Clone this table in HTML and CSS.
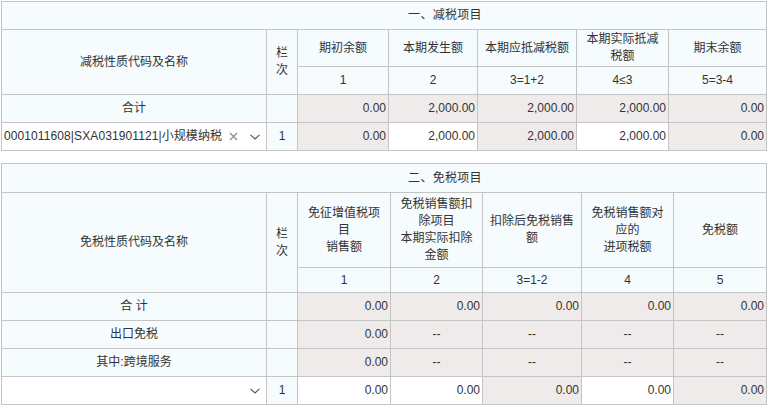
FILE: index.html
```html
<!DOCTYPE html>
<html lang="zh">
<head>
<meta charset="utf-8">
<link rel="stylesheet" href="styles.css">
</head>
<body>
<div class="page">
  <table class="grid">
    <colgroup>
      <col class="w-name"><col class="w-no"><col class="w-a1"><col class="w-a2"><col class="w-a3"><col class="w-a4"><col class="w-a5">
    </colgroup>
    <tr class="r-title"><td class="title" colspan="7">一、减税项目</td></tr>
    <tr class="r-head1">
      <th class="hd" rowspan="2">减税性质代码及名称</th>
      <th class="hd" rowspan="2">栏次</th>
      <th class="hd">期初余额</th>
      <th class="hd">本期发生额</th>
      <th class="hd">本期应抵减税额</th>
      <th class="hd">本期实际抵减税额</th>
      <th class="hd">期末余额</th>
    </tr>
    <tr class="r-row">
      <th class="hd">1</th><th class="hd">2</th><th class="hd">3=1+2</th><th class="hd">4≤3</th><th class="hd">5=3-4</th>
    </tr>
    <tr class="r-row">
      <th class="hd">合计</th><th class="hd"></th>
      <td class="num ro">0.00</td><td class="num ro">2,000.00</td><td class="num ro">2,000.00</td><td class="num ro">2,000.00</td><td class="num ro">0.00</td>
    </tr>
    <tr class="r-row">
      <td class="sel">
        <div class="sel-box">
          <span class="sel-text">0001011608|SXA031901121|小规模纳税</span>
          <svg class="ico-x" width="9" height="9" viewBox="0 0 9 9"><path d="M1 1L8 8M8 1L1 8" stroke="#8f8f8f" stroke-width="1.3" fill="none"/></svg>
          <svg class="ico-down" width="10" height="6" viewBox="0 0 10 6"><path d="M0.5 0.8L5 5L9.5 0.8" stroke="#555" stroke-width="1.1" fill="none"/></svg>
        </div>
      </td>
      <th class="hd">1</th>
      <td class="num ro">0.00</td><td class="num">2,000.00</td><td class="num ro">2,000.00</td><td class="num">2,000.00</td><td class="num ro">0.00</td>
    </tr>
  </table>

  <table class="grid second">
    <colgroup>
      <col class="w-name"><col class="w-no"><col class="w-b1"><col class="w-b2"><col class="w-b3"><col class="w-b4"><col class="w-b5">
    </colgroup>
    <tr class="r-title2"><td class="title" colspan="7">二、免税项目</td></tr>
    <tr class="r-head2">
      <th class="hd" rowspan="2">免税性质代码及名称</th>
      <th class="hd" rowspan="2">栏次</th>
      <th class="hd">免征增值税项目<br>销售额</th>
      <th class="hd">免税销售额扣除项目<br>本期实际扣除金额</th>
      <th class="hd">扣除后免税销售额</th>
      <th class="hd">免税销售额对应的<br>进项税额</th>
      <th class="hd">免税额</th>
    </tr>
    <tr class="r-idx2">
      <th class="hd">1</th><th class="hd">2</th><th class="hd">3=1-2</th><th class="hd">4</th><th class="hd">5</th>
    </tr>
    <tr class="r-row">
      <th class="hd">合 计</th><th class="hd"></th>
      <td class="num ro">0.00</td><td class="num ro">0.00</td><td class="num ro">0.00</td><td class="num ro">0.00</td><td class="num ro">0.00</td>
    </tr>
    <tr class="r-row">
      <th class="hd">出口免税</th><th class="hd"></th>
      <td class="num ro">0.00</td><td class="ro dash">--</td><td class="ro dash">--</td><td class="ro dash">--</td><td class="ro dash">--</td>
    </tr>
    <tr class="r-row">
      <th class="hd">其中:跨境服务</th><th class="hd"></th>
      <td class="num ro">0.00</td><td class="ro dash">--</td><td class="ro dash">--</td><td class="ro dash">--</td><td class="ro dash">--</td>
    </tr>
    <tr class="r-row">
      <td class="sel">
        <div class="sel-box">
          <span class="sel-text"></span>
          <svg class="ico-down" width="10" height="6" viewBox="0 0 10 6"><path d="M0.5 0.8L5 5L9.5 0.8" stroke="#555" stroke-width="1.1" fill="none"/></svg>
        </div>
      </td>
      <th class="hd">1</th>
      <td class="num">0.00</td><td class="num">0.00</td><td class="num ro">0.00</td><td class="num">0.00</td><td class="num ro">0.00</td>
    </tr>
  </table>
</div>
</body>
</html>
```

FILE: styles.css
```css
html, body {
  margin: 0;
  padding: 0;
  background: #ffffff;
}

.page {
  padding: 1px 0 0 1px;
  font-family: "Liberation Sans", Arial, "Noto Sans CJK SC", sans-serif;
  font-size: 12px;
  color: #333333;
}

.grid {
  border-collapse: collapse;
  table-layout: fixed;
  width: 766px;
}

.grid.second {
  margin-top: 12px;
}

.w-name { width: 265px; }
.w-no { width: 31px; }
.w-a1 { width: 91px; }
.w-a2 { width: 89px; }
.w-a3 { width: 99px; }
.w-a4 { width: 92px; }
.w-a5 { width: 98px; }
.w-b1 { width: 93px; }
.w-b2 { width: 92px; }
.w-b3 { width: 99px; }
.w-b4 { width: 92px; }
.w-b5 { width: 93px; }

.grid td, .grid th {
  border: 1px solid #c4c4c4;
  padding: 0 5px;
  line-height: 17px;
  font-weight: normal;
  vertical-align: middle;
  overflow: hidden;
}

.r-title td { height: 27px; }
.r-title2 td { height: 28px; }
.r-head1 th { height: 36px; }
.r-head2 th { height: 74px; }
.r-row td, .r-row th { height: 27px; }
.r-idx2 th { height: 24px; }

.grid .title {
  background: #f6fbfd;
  text-align: center;
  padding: 0 0 0 122px;
  letter-spacing: 0.3px;
}

.grid .hd {
  background: #f6fbfd;
  text-align: center;
}

.grid .num {
  text-align: right;
  padding: 0 2px 0 0;
  background: #ffffff;
}

.grid .ro {
  background: #efebeb;
}

.grid .dash {
  text-align: center;
  padding: 0;
}

.grid .sel {
  background: #ffffff;
  padding: 0 6px 0 2px;
}

.sel-box {
  display: flex;
  align-items: center;
}

.sel-text {
  flex: 1;
  min-width: 0;
  white-space: nowrap;
  overflow: hidden;
  letter-spacing: 0.1px;
}

.ico-x {
  margin: 0 12px 0 6px;
  flex: none;
}

.ico-down {
  flex: none;
}
```
